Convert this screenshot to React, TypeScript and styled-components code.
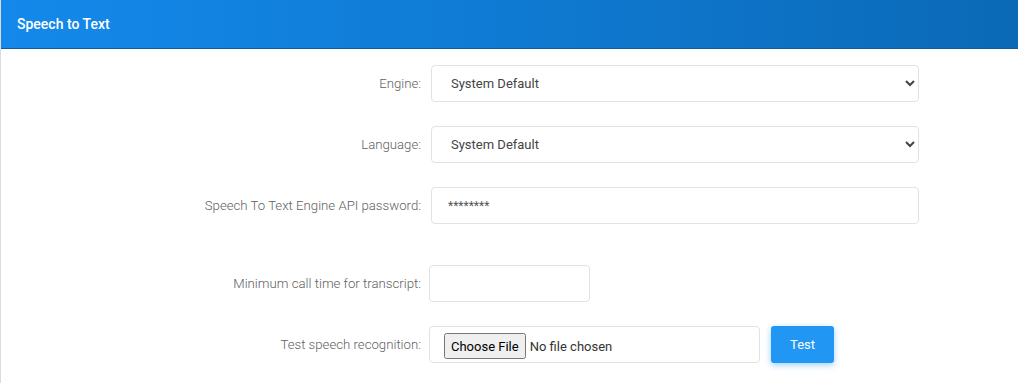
import React from 'react';
import styled, { createGlobalStyle } from 'styled-components';

const GlobalStyle = createGlobalStyle`
  html, body {
    margin: 0;
    padding: 0;
    background: #ffffff;
    font-family: Roboto, "Liberation Sans", Arial, sans-serif;
  }
`;

const Panel = styled.section`
  width: 1030px;
  border-left: 1px solid #dcdcdc;
  background: #ffffff;
`;

const Header = styled.header`
  height: 48px;
  display: flex;
  align-items: center;
  padding-left: 16px;
  background: linear-gradient(90deg, #1489eb 0%, #0f7ad2 50%, #0b69b6 100%);
  box-shadow: 0 1px 0 #0a5fa3;
`;

const Title = styled.h3`
  margin: 0;
  color: #ffffff;
  font-size: 14px;
  font-weight: 500;
`;

const Body = styled.div`
  padding: 17px 0 20px;
  display: flex;
  flex-direction: column;
`;

const Row = styled.div<{ gapTop?: number }>`
  display: flex;
  align-items: center;
  margin-top: ${({ gapTop }) => gapTop ?? 0}px;
`;

const Label = styled.label`
  width: 430px;
  padding-right: 10px;
  box-sizing: border-box;
  text-align: right;
  font-size: 13.2px;
  font-weight: 300;
  color: #5f5f5f;
`;

const Field = styled.div<{ shift?: number }>`
  margin-left: ${({ shift }) => shift ?? 0}px;
  display: flex;
  align-items: center;
  gap: 11px;
`;

const Select = styled.select`
  width: 488px;
  height: 37px;
  box-sizing: border-box;
  padding: 0 15px;
  border: 1px solid #e2e2e2;
  border-radius: 4px;
  background: #ffffff;
  font-family: Roboto, "Liberation Sans", Arial, sans-serif;
  font-size: 13px;
  color: #444444;
  outline: none;
`;

const TextInput = styled.input<{ w: number }>`
  width: ${({ w }) => w}px;
  height: 37px;
  box-sizing: border-box;
  padding: 0 16px;
  border: 1px solid #e2e2e2;
  border-radius: 4px;
  background: #ffffff;
  font-family: Roboto, "Liberation Sans", Arial, sans-serif;
  font-size: 12px;
  color: #555555;
  outline: none;
`;

const FileBox = styled.div`
  width: 331px;
  height: 37px;
  box-sizing: border-box;
  padding: 0 14px;
  display: flex;
  align-items: center;
  border: 1px solid #e2e2e2;
  border-radius: 4px;
`;

const FileInput = styled.input`
  font-family: Roboto, "Liberation Sans", Arial, sans-serif;
  font-size: 13px;
  color: #333333;
  margin-top: 3px;

  &::file-selector-button {
    font-family: Roboto, "Liberation Sans", Arial, sans-serif;
    font-size: 13px;
    height: 26px;
    padding: 0 5px;
    margin-right: 4px;
  }
`;

const TestButton = styled.button`
  height: 37px;
  padding: 0 19px;
  border: none;
  border-radius: 3px;
  background: #2196f3;
  color: #ffffff;
  font-family: Roboto, "Liberation Sans", Arial, sans-serif;
  font-size: 13px;
  box-shadow: 0 2px 6px rgba(33, 150, 243, 0.45);
  cursor: pointer;
`;

export default function App() {
  return (
    <>
      <GlobalStyle />
      <Panel>
        <Header>
          <Title>Speech to Text</Title>
        </Header>
        <Body>
          <Row>
            <Label>Engine:</Label>
            <Field>
              <Select defaultValue="default">
                <option value="default">System Default</option>
              </Select>
            </Field>
          </Row>
          <Row gapTop={24}>
            <Label>Language:</Label>
            <Field>
              <Select defaultValue="default">
                <option value="default">System Default</option>
              </Select>
            </Field>
          </Row>
          <Row gapTop={24}>
            <Label>Speech To Text Engine API password:</Label>
            <Field>
              <TextInput w={488} type="text" defaultValue="********" />
            </Field>
          </Row>
          <Row gapTop={41}>
            <Label>Minimum call time for transcript:</Label>
            <Field shift={-2}>
              <TextInput w={161} type="text" />
            </Field>
          </Row>
          <Row gapTop={24}>
            <Label>Test speech recognition:</Label>
            <Field shift={-2}>
              <FileBox>
                <FileInput type="file" />
              </FileBox>
              <TestButton type="button">Test</TestButton>
            </Field>
          </Row>
        </Body>
      </Panel>
    </>
  );
}
